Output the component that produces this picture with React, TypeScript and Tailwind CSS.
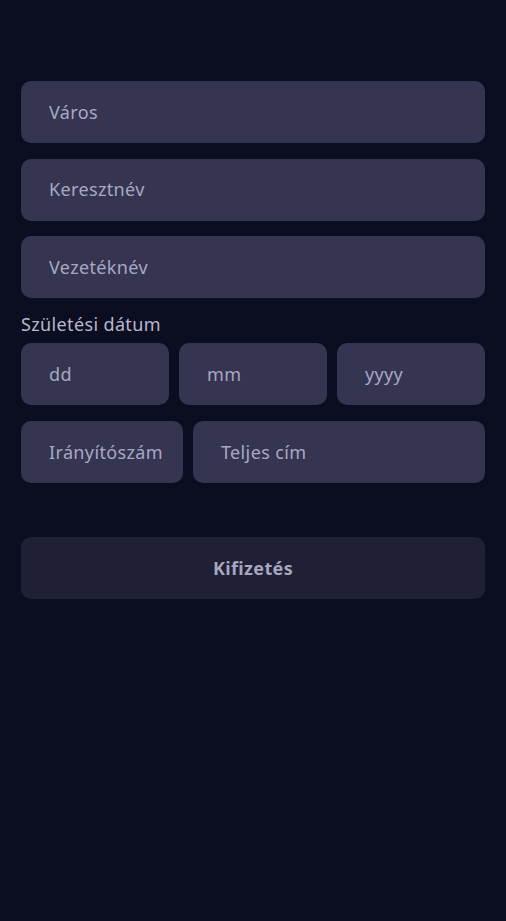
import React from "react";

const font = { fontFamily: "'Noto Sans', 'Open Sans', sans-serif" };

function Field({ label, className = "" }: { label: string; className?: string }) {
  return (
    <div
      className={`h-[62px] rounded-[10px] bg-[#353451] flex items-center pl-[28px] pr-[2px] text-[18px] tracking-[0.02em] text-[#a9a8c2] whitespace-nowrap ${className}`}
    >
      {label}
    </div>
  );
}

export default function App() {
  return (
    <div className="min-h-[921px] w-full bg-[#0b0d21]" style={font}>
      <div className="px-[21px] pt-[81px] flex flex-col">
        <div className="flex flex-col gap-[15.5px]">
          <Field label="Város" />
          <Field label="Keresztnév" />
          <Field label="Vezetéknév" />
        </div>
        <div className="mt-[14px] text-[18px] tracking-[0.02em] leading-[24px] text-[#b8b7cc]">Születési dátum</div>
        <div className="mt-[7px] grid grid-cols-3 gap-[10px]">
          <Field label="dd" />
          <Field label="mm" />
          <Field label="yyyy" />
        </div>
        <div className="mt-[16px] flex gap-[10px]">
          <Field label="Irányítószám" className="w-[162px] shrink-0" />
          <Field label="Teljes cím" className="flex-1" />
        </div>
        <button className="mt-[54px] h-[62px] rounded-[10px] bg-[#1f1f35] text-[18px] tracking-[0.02em] font-bold text-[#a7a6bf]">
          Kifizetés
        </button>
      </div>
    </div>
  );
}
